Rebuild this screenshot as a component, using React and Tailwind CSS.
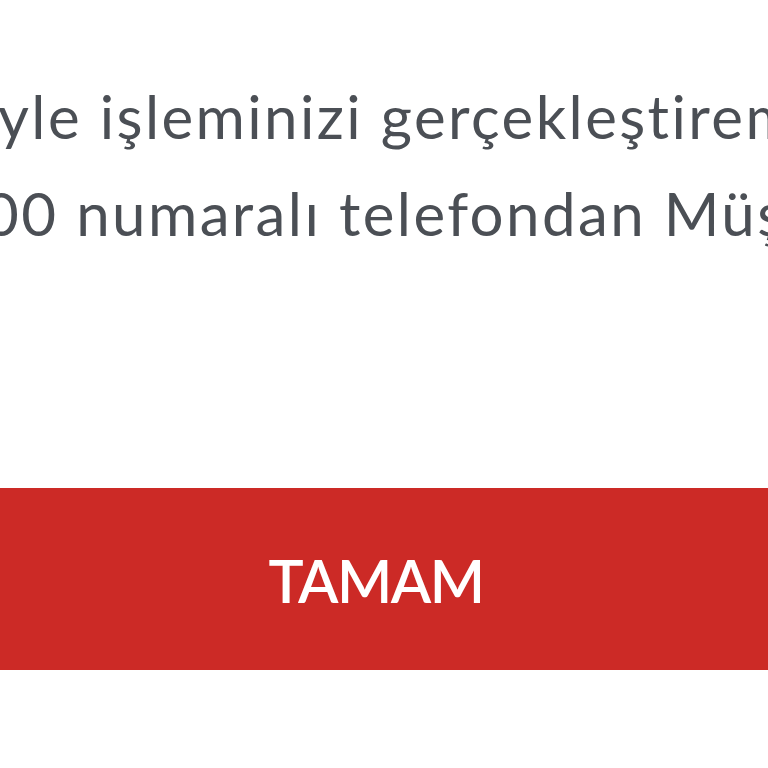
export default function App() {
  return (
    <div className="w-[768px] h-[768px] bg-white overflow-hidden flex flex-col" style={{ fontFamily: "Lato, 'Noto Sans', sans-serif" }}>
      <div className="pt-[68px] h-[488px] overflow-hidden whitespace-nowrap text-[#4b4f55] text-[60px] leading-[97px] tracking-[2.4px]">
        <div className="-ml-[2px]">yle işleminizi gerçekleştiremedik.</div>
        <div className="-ml-[16px]">00 numaralı telefondan Müşteri</div>
      </div>
      <div className="h-[182px] bg-[#cc2a26] flex items-center justify-center">
        <span className="text-white text-[59px] leading-none font-semibold tracking-[-1.5px] -ml-[16px] mt-[2px]">TAMAM</span>
      </div>
    </div>
  );
}
